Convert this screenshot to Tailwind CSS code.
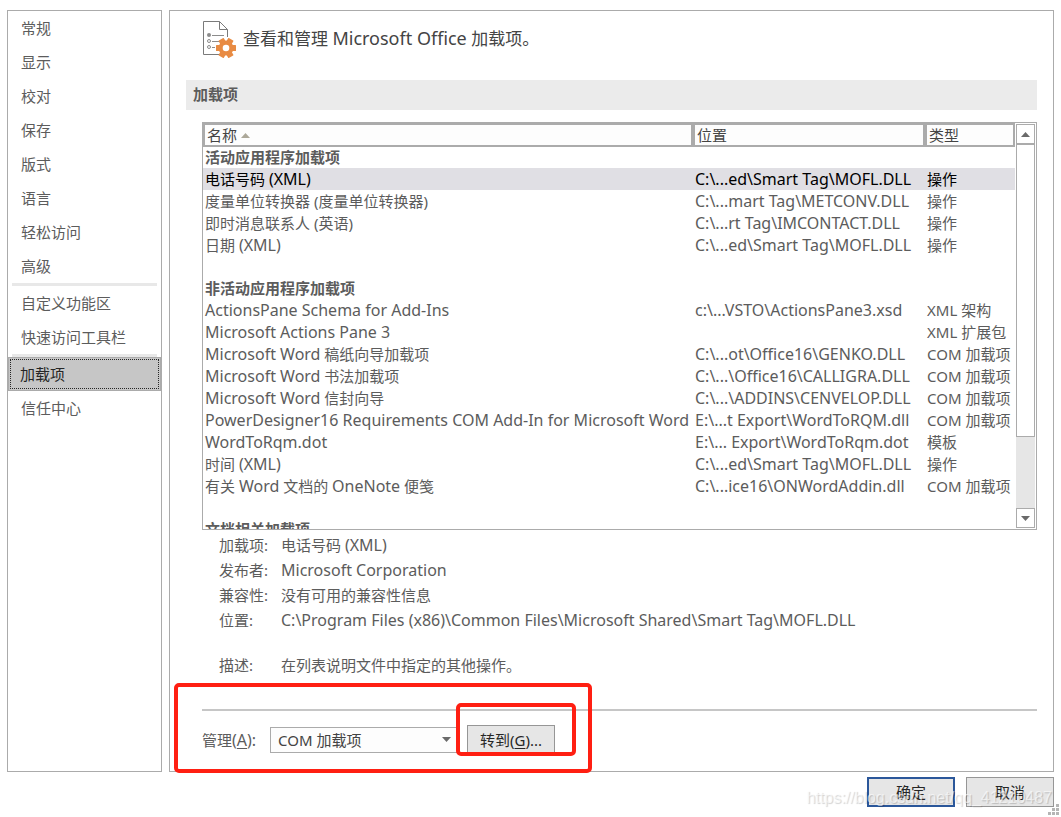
<!DOCTYPE html>
<html lang="zh-CN">
<head>
    <meta charset="UTF-8">
    <meta name="viewport" content="width=device-width, initial-scale=1.0">
    <title>Word 选项</title>
    <script src="https://cdn.jsdelivr.net/npm/@tailwindcss/browser@4"></script>
</head>
<body class="relative min-h-screen flex flex-col bg-white px-[7px] py-[10px] font-['Noto_Sans','Noto_Sans_CJK_SC',sans-serif] text-[15px] leading-[22px] text-[#5c5c5c]">

    <div class="flex-1 flex gap-[7px]">
        <!-- 左侧导航 -->
        <nav class="w-[155px] shrink-0 flex flex-col border border-[#ababab]">
            <a href="#" class="h-[34px] px-[13px] flex items-center">常规</a>
            <a href="#" class="h-[34px] px-[13px] flex items-center">显示</a>
            <a href="#" class="h-[34px] px-[13px] flex items-center">校对</a>
            <a href="#" class="h-[34px] px-[13px] flex items-center">保存</a>
            <a href="#" class="h-[34px] px-[13px] flex items-center">版式</a>
            <a href="#" class="h-[34px] px-[13px] flex items-center">语言</a>
            <a href="#" class="h-[34px] px-[13px] flex items-center">轻松访问</a>
            <a href="#" class="h-[34px] px-[13px] flex items-center">高级</a>
            <hr class="mx-1 border-t-3 border-[#e8e8e8]">
            <a href="#" class="h-[34px] px-[13px] flex items-center">自定义功能区</a>
            <a href="#" class="h-[34px] px-[13px] flex items-center">快速访问工具栏</a>
            <hr class="mx-1 border-t-3 border-[#e8e8e8]">
            <a href="#" aria-current="page" class="h-[34px] p-px flex bg-[#c6c6c6] border border-[#ababab] text-[#262626]">
                <span class="flex-1 px-[9px] flex items-center border border-dotted border-[#262626]">加载项</span>
            </a>
            <a href="#" class="h-[34px] px-[13px] flex items-center">信任中心</a>
        </nav>

        <!-- 右侧内容 -->
        <main class="relative flex-1 min-w-0 border border-[#ababab] px-4 pt-[9px]">
            <div class="pl-4 flex items-center gap-[7px]">
                <svg class="w-[34px] h-[38px]" viewBox="0 0 34 38" fill="none">
                    <path d="M17 34.5H1.500V1.500H17.500L25.500 9.500V17" stroke="#7a7a7a" fill="white"/>
                    <path d="M17.500 1.500V9.500H25.500" stroke="#7a7a7a"/>
                    <circle cx="7" cy="15" r="2" fill="#8c8c8c"/>
                    <circle cx="7" cy="21" r="1.500" stroke="#8c8c8c"/>
                    <circle cx="7" cy="27" r="1.500" stroke="#8c8c8c"/>
                    <path d="M10 15.500H22M10 21.500H17M10 27.500H13" stroke="#8c8c8c"/>
                    <g fill="#e88b43">
                        <circle cx="24" cy="28" r="7.500"/>
                        <rect x="14" y="25" width="20" height="6" rx="0.500"/>
                        <rect x="14" y="25" width="20" height="6" rx="0.500" transform="rotate(60 24 28)"/>
                        <rect x="14" y="25" width="20" height="6" rx="0.500" transform="rotate(120 24 28)"/>
                    </g>
                    <circle cx="24" cy="28" r="3.300" fill="white"/>
                </svg>
                <h1 class="pb-0.5 text-[17px] text-[#444444]">查看和管理 <span class="text-[18px]">Microsoft Office</span> 加载项。</h1>
            </div>

            <h2 class="mt-[22px] h-[30px] px-[7px] pb-[3px] flex items-center bg-[#ebebeb] font-bold">加载项</h2>

            <div class="mt-3 ml-4 h-[408px] flex border border-[#ababab]">
                <div class="flex-1 min-w-0 overflow-hidden">
                    <table class="w-full table-fixed border-separate border-spacing-0 whitespace-nowrap text-left">
                        <colgroup>
                            <col>
                            <col class="w-[232px]">
                            <col class="w-[90px]">
                        </colgroup>
                        <thead class="text-[#444444] leading-[20px]">
                            <tr class="h-6">
                                <th class="border-2 border-[#ababab] bg-[#fdfdfd] px-0.5 py-0 font-normal">名称 <svg class="inline w-[9px] h-[5px] mb-[3px]" viewBox="0 0 9 5"><path d="M0 5L4.500 0L9 5Z" fill="#aca899"/></svg></th>
                                <th class="border-2 border-[#ababab] bg-[#fdfdfd] px-0.5 py-0 font-normal">位置</th>
                                <th class="border-2 border-[#ababab] bg-[#fdfdfd] px-0.5 py-0 font-normal">类型</th>
                            </tr>
                        </thead>
                        <tbody class="[&_td]:px-0.5 [&_td]:py-0 [&_td:nth-child(2)]:text-[16px] [&_span]:text-[16px] [&_span]:leading-none">
                            <tr class="h-[21px] leading-[21px] font-bold"><td colspan="3">活动应用程序加载项</td></tr>
                            <tr class="h-[22px] bg-[#e0dfe4] text-black"><td>电话号码 <span>(XML)</span></td><td>C:\...ed\Smart Tag\MOFL.DLL</td><td>操作</td></tr>
                            <tr class="h-[22px]"><td>度量单位转换器 (度量单位转换器)</td><td>C:\...mart Tag\METCONV.DLL</td><td>操作</td></tr>
                            <tr class="h-[22px]"><td>即时消息联系人 (英语)</td><td>C:\...rt Tag\IMCONTACT.DLL</td><td>操作</td></tr>
                            <tr class="h-[22px]"><td>日期 <span>(XML)</span></td><td>C:\...ed\Smart Tag\MOFL.DLL</td><td>操作</td></tr>
                            <tr class="h-[22px]"><td colspan="3"></td></tr>
                            <tr class="h-[21px] leading-[21px] font-bold"><td colspan="3">非活动应用程序加载项</td></tr>
                            <tr class="h-[22px]"><td><span>ActionsPane Schema for Add-Ins</span></td><td>c:\...VSTO\ActionsPane3.xsd</td><td>XML 架构</td></tr>
                            <tr class="h-[22px]"><td><span>Microsoft Actions Pane 3</span></td><td></td><td>XML 扩展包</td></tr>
                            <tr class="h-[22px]"><td><span>Microsoft Word</span> 稿纸向导加载项</td><td>C:\...ot\Office16\GENKO.DLL</td><td>COM 加载项</td></tr>
                            <tr class="h-[22px]"><td><span>Microsoft Word</span> 书法加载项</td><td>C:\...\Office16\CALLIGRA.DLL</td><td>COM 加载项</td></tr>
                            <tr class="h-[22px]"><td><span>Microsoft Word</span> 信封向导</td><td>C:\...\ADDINS\CENVELOP.DLL</td><td>COM 加载项</td></tr>
                            <tr class="h-[22px]"><td><span>PowerDesigner16 Requirements COM Add-In for Microsoft Word</span></td><td>E:\...t Export\WordToRQM.dll</td><td>COM 加载项</td></tr>
                            <tr class="h-[22px]"><td><span>WordToRqm.dot</span></td><td>E:\... Export\WordToRqm.dot</td><td>模板</td></tr>
                            <tr class="h-[22px]"><td>时间 <span>(XML)</span></td><td>C:\...ed\Smart Tag\MOFL.DLL</td><td>操作</td></tr>
                            <tr class="h-[22px]"><td>有关 <span>Word</span> 文档的 <span>OneNote</span> 便笺</td><td>C:\...ice16\ONWordAddin.dll</td><td>COM 加载项</td></tr>
                            <tr class="h-[22px]"><td colspan="3"></td></tr>
                            <tr class="h-[21px] leading-[21px] font-bold"><td colspan="3">文档相关加载项</td></tr>
                        </tbody>
                    </table>
                </div>
                <!-- 滚动条 -->
                <div class="w-[21px] shrink-0 p-px flex flex-col">
                    <button aria-label="向上滚动" class="h-5 shrink-0 flex items-center justify-center border border-[#ababab]">
                        <svg class="w-[9px] h-[5px]" viewBox="0 0 9 5"><path d="M0 5L4.500 0L9 5Z" fill="#6a6a6a"/></svg>
                    </button>
                    <div class="flex-1 bg-[#e6e6e6]">
                        <div class="h-[293px] bg-white border border-[#ababab]"></div>
                    </div>
                    <button aria-label="向下滚动" class="h-5 shrink-0 flex items-center justify-center border border-[#ababab] bg-white">
                        <svg class="w-[9px] h-[5px]" viewBox="0 0 9 5"><path d="M0 0L4.500 5L9 0Z" fill="#6a6a6a"/></svg>
                    </button>
                </div>
            </div>

            <dl class="mt-[3px] ml-[33px] grid grid-cols-[62px_1fr] leading-[25px] [&_span]:text-[16px] [&_span]:leading-none">
                <dt>加载项:</dt><dd>电话号码 <span>(XML)</span></dd>
                <dt>发布者:</dt><dd><span>Microsoft Corporation</span></dd>
                <dt>兼容性:</dt><dd>没有可用的兼容性信息</dd>
                <dt>位置:</dt><dd><span>C:\Program Files (x86)\Common Files\Microsoft Shared\Smart Tag\MOFL.DLL</span></dd>
                <dt class="mt-5">描述:</dt><dd class="mt-5">在列表说明文件中指定的其他操作。</dd>
            </dl>

            <hr class="mt-[31px] ml-4 border-t-2 border-[#c6c6c6]">

            <div class="mt-[14px] ml-4 flex items-center">
                <label for="manage" class="w-[68px]">管理<span class="text-[16px] leading-none">(<u class="underline-offset-2">A</u>):</span></label>
                <div class="relative w-[188px]">
                    <select id="manage" class="w-full h-[26px] px-[7px] appearance-none border border-[#ababab] bg-[#fdfdfd] leading-[22px] text-[#444444]">
                        <option>COM 加载项</option>
                        <option>操作</option>
                        <option>模板</option>
                    </select>
                    <svg class="absolute right-[7px] top-[10px] w-[9px] h-[5px] pointer-events-none" viewBox="0 0 9 5"><path d="M0 0L4.500 5L9 0Z" fill="#6a6a6a"/></svg>
                </div>
                <button class="ml-[9px] w-[88px] h-[30px] border border-[#969696] bg-[#e6e6e6] text-[#262626]">转到(<u class="underline-offset-2">G</u>)...</button>
            </div>

            <!-- 红色标注框 -->
            <div class="absolute left-1 -bottom-0.5 w-[418px] h-[90px] rounded-[5px] border-4 border-[#ff1f12] pointer-events-none"></div>
            <div class="absolute left-[286px] bottom-[15px] w-[120px] h-[53px] rounded-[5px] border-4 border-[#ff1f12] pointer-events-none"></div>
        </main>
    </div>

    <div class="mt-[5px] flex justify-end gap-[11px] text-[#262626]">
        <button class="w-[88px] h-[30px] border-2 border-[#2b579a] bg-[#e6e6e6]">确定</button>
        <button class="w-[88px] h-[30px] border border-[#969696] bg-[#e6e6e6]">取消</button>
    </div>

    <!-- 水印 -->
    <p class="absolute right-[9px] bottom-2 font-['Liberation_Sans',sans-serif] text-[16px] text-white/60 text-shadow-[1px_1px_1px_rgb(0_0_0/0.18)] pointer-events-none">https://blog.csdn.net/qq_41210487</p>
    <!-- 调整大小手柄 -->
    <svg class="absolute right-0.5 bottom-[2px] w-[11px] h-[11px]" viewBox="0 0 11 11" fill="#b5b5b5">
        <path d="M8 0h3v3h-3zM4 4h3v3h-3zM8 4h3v3h-3zM0 8h3v3h-3zM4 8h3v3h-3zM8 8h3v3h-3z"/>
    </svg>

</body>
</html>
